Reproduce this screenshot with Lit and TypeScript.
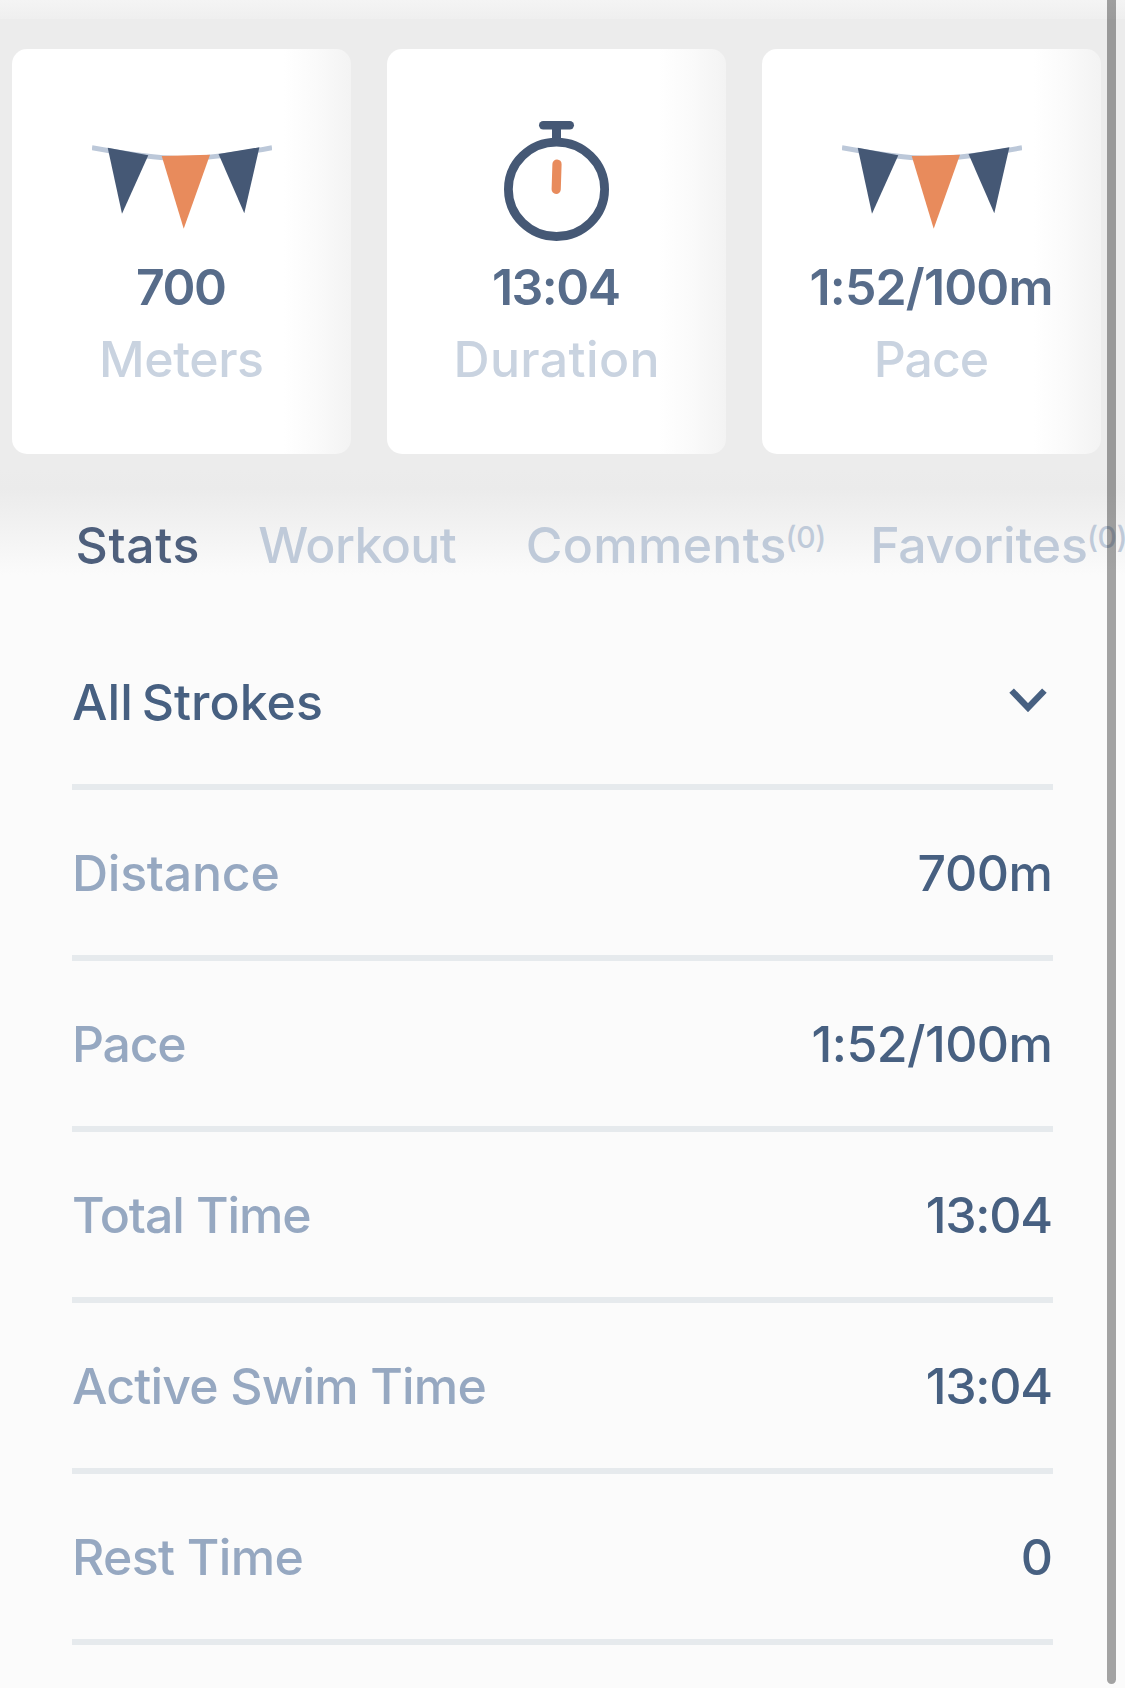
import { LitElement, html, svg, css } from "lit";
import { customElement, property } from "lit/decorators.js";
import { classMap } from "lit/directives/class-map.js";

// [text, letter-spacing in px]
type Label = [string, number];

const CARDS: { icon: "flags" | "watch"; value: Label; label: Label }[] = [
  { icon: "flags", value: ["700", -1.5], label: ["Meters", -0.44] },
  { icon: "watch", value: ["13:04", -1.5], label: ["Duration", 0.36] },
  { icon: "flags", value: ["1:52/100m", -0.84], label: ["Pace", -1] },
];

const TABS: { text: Label; count?: number; active?: boolean }[] = [
  { text: ["Stats", 0.6], active: true },
  { text: ["Workout", -0.6] },
  { text: ["Comments", 0.3], count: 0 },
  { text: ["Favorites", -0.2], count: 0 },
];

const ROWS: { label: Label; value: Label }[] = [
  { label: ["Distance", -0.25], value: ["700m", -0.43] },
  { label: ["Pace", -1.3], value: ["1:52/100m", -0.55] },
  { label: ["Total Time", -1.1], value: ["13:04", -1.25] },
  { label: ["Active Swim Time", -0.82], value: ["13:04", -1.25] },
  { label: ["Rest Time", -0.7], value: ["0", 0] },
];

// The margin cancels the spacing added after the last letter.
const text = ([t, spacing]: Label, cls: string) =>
  html`<span class=${cls} style="letter-spacing:${spacing}px;margin-right:${-spacing}px">${t}</span>`;

const flags = svg`
  <path d="M0 26.7 Q55 36.8 90 37.6 Q125 37 180 26.7" fill="none" stroke="#bcc8d9" stroke-width="4.8"/>
  <path d="M15.7 26.7 L56.3 34.3 L30 92.7Z" fill="#455875"/>
  <path d="M69.7 35 L118 33.7 L91.7 107.7Z" fill="#e88b5c"/>
  <path d="M126.5 33 L167.4 26.3 L152.3 92.3Z" fill="#455875"/>`;

const watch = svg`
  <rect x="72" y="0" width="35" height="8.4" rx="4.2" fill="#455875"/>
  <rect x="85" y="4" width="9" height="16" fill="#455875"/>
  <ellipse cx="89.5" cy="68.3" rx="48.1" ry="47.2" fill="none" stroke="#455875" stroke-width="8.8"/>
  <path d="M90 43 L89.2 68.3" fill="none" stroke="#e88b5c" stroke-width="9.2" stroke-linecap="round"/>`;

@customElement("summary-card")
class SummaryCard extends LitElement {
  static styles = css`
    :host {
      display: flex;
      flex-direction: column;
      align-items: center;
      box-sizing: border-box;
      flex: none;
      width: 339px;
      height: 405px;
      padding-top: 72px;
      border-radius: 15px;
      background: linear-gradient(to right, #fff 80%, #fafafa 90%, #f3f3f3 100%);
    }
    .icon {
      width: 180px;
      height: 120px;
      margin-bottom: 10px;
    }
    .value,
    .label {
      font-size: 50px;
      line-height: 72px;
      white-space: nowrap;
    }
    .value {
      font-weight: 600;
      color: #576c8a;
    }
    .label {
      font-weight: 500;
      color: #c9d3e0;
    }
  `;
  @property() icon = "flags";
  @property({ attribute: false }) value: Label = ["", 0];
  @property({ attribute: false }) label: Label = ["", 0];

  render() {
    return html`
      <svg class="icon" viewBox="0 0 180 120">${this.icon === "flags" ? flags : watch}</svg>
      ${text(this.value, "value")} ${text(this.label, "label")}
    `;
  }
}

@customElement("app-root")
class AppRoot extends LitElement {
  static styles = css`
    :host {
      display: block;
      position: relative;
      width: 1125px;
      height: 1688px;
      overflow: hidden;
      background: #fbfbfb;
      font-family: Inter, "Liberation Sans", sans-serif;
      font-size: 50px;
      line-height: 72px;
    }
    .top {
      box-sizing: border-box;
      height: 619px;
      padding-top: 49px;
      background: linear-gradient(
        to bottom,
        #f4f4f4 0,
        #efefef 19px,
        #ececec 19px,
        #ececec 470px,
        #ebebeb 488px,
        #f0f0f0 517px,
        #fbfbfb 575px
      );
    }
    .cards {
      display: flex;
      gap: 36px;
      padding-left: 12px;
      margin-bottom: 55px;
    }
    .tabs {
      display: grid;
      grid-template-columns: 182.8px 267.5px 344.4px auto;
      padding-left: 75.5px;
    }
    .tab {
      display: flex;
      white-space: nowrap;
      font-weight: 500;
      color: #bfcad9;
    }
    .tab.active {
      color: #4e5f7c;
    }
    .count {
      margin-left: -1px;
      font-size: 30px;
      font-weight: 500;
      line-height: 56px;
      letter-spacing: -0.4px;
    }
    .list {
      padding: 0 72px;
    }
    .row {
      display: flex;
      align-items: center;
      justify-content: space-between;
      height: 165px;
      border-bottom: 6px solid #e6eaed;
      font-weight: 500;
    }
    .name {
      color: #96a8c1;
    }
    .value,
    .heading {
      color: #476081;
    }
    .heading {
      word-spacing: -4.5px;
    }
    .chevron {
      width: 38px;
      height: 24px;
      margin: 0 6.5px 3px 0;
    }
    .scrollbar {
      position: absolute;
      top: -10px;
      left: 1107px;
      width: 9px;
      height: 1694px;
      border-radius: 5px;
      background: rgba(0, 0, 0, 0.35);
    }
  `;

  render() {
    return html`
      <div class="top">
        <div class="cards">
          ${CARDS.map(
            (c) => html`<summary-card .icon=${c.icon} .value=${c.value} .label=${c.label}></summary-card>`
          )}
        </div>
        <nav class="tabs">
          ${TABS.map(
            (t) => html`<div class=${classMap({ tab: true, active: !!t.active })}>
              ${text(t.text, "title")}${t.count === undefined ? "" : html`<span class="count">(${t.count})</span>`}
            </div>`
          )}
        </nav>
      </div>
      <div class="list">
        <div class="row">
          ${text(["All Strokes", 0.04], "heading")}
          <svg class="chevron" viewBox="0 0 38 24">
            <path d="M2.6 2.6 L19 19.6 L35.4 2.6" fill="none" stroke="#476081" stroke-width="6.4" />
          </svg>
        </div>
        ${ROWS.map((r) => html`<div class="row">${text(r.label, "name")}${text(r.value, "value")}</div>`)}
      </div>
      <div class="scrollbar"></div>
    `;
  }
}
